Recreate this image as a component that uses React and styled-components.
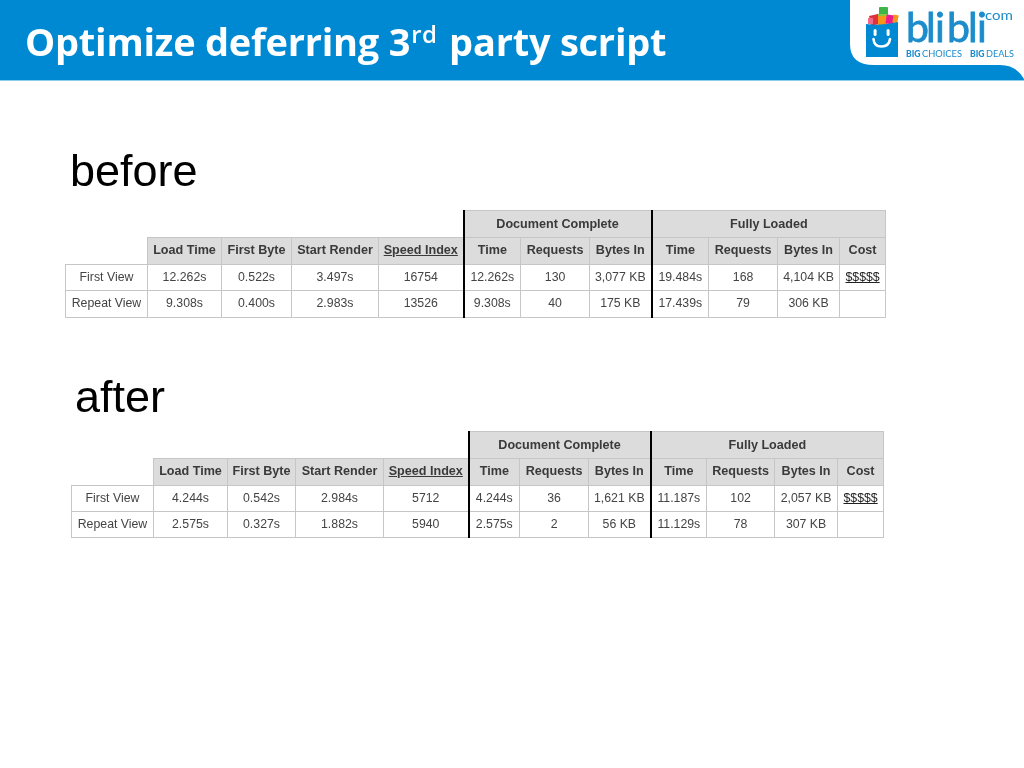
import React from "react";
import styled, { createGlobalStyle } from "styled-components";

const Global = createGlobalStyle`
  html, body { margin: 0; padding: 0; background: #fff; }
  body { font-family: "Liberation Sans", Arial, sans-serif; }
`;

const Slide = styled.div`
  width: 1024px;
  height: 768px;
  overflow: hidden;
  background: #fff;
`;

const Header = styled.header`
  position: relative;
  height: 81px;
  box-sizing: border-box;
  background: #0089d3;
  border-bottom: 1px solid #8ccdee;
  padding: 16px 0 0 25px;
`;

const Title = styled.h1`
  margin: 0;
  font-family: "Open Sans", sans-serif;
  font-weight: 700;
  font-size: 38px;
  line-height: 50px;
  letter-spacing: -0.24px;
  color: #fff;
  white-space: nowrap;
  filter: blur(0.3px);
  sup { font-size: 24px; line-height: 0; vertical-align: 13px; font-weight: 600; letter-spacing: 0.5px; margin: 0 2px 0 1px; }
`;

const LogoArt = styled.svg`
  position: absolute;
  top: 0;
  right: 0;
  display: block;
`;

const Main = styled.main`
  display: flex;
  flex-direction: column;
`;

const Section = styled.section`
  display: flex;
  flex-direction: column;
  padding-left: ${(p) => p.$left}px;
  padding-top: ${(p) => p.$top}px;
`;

const Label = styled.div`
  font-size: 45px;
  line-height: 52px;
  color: #000;
  margin-left: ${(p) => p.$indent}px;
  margin-bottom: ${(p) => p.$gap}px;
  filter: blur(0.3px);
`;

const Table = styled.table`
  border-collapse: collapse;
  table-layout: fixed;
  width: ${(p) => p.$width}px;
  filter: blur(0.45px);
  color: #3a3a3a;
  font-size: 12.3px;
`;

const HeadRow = styled.tr`
  height: ${(p) => p.$h}px;
`;

const Row = styled.tr`
  height: ${(p) => p.$h}px;
`;

const Blank = styled.th`
  border: none;
  padding: 0;
`;

const Head = styled.th`
  padding: 0 0 ${(p) => (p.$group ? 0 : 2)}px;
  background: #dcdcdc;
  border: 1px solid #c6c6c6;
  border-left: ${(p) => (p.$thick ? "2px solid #000" : "1px solid #c6c6c6")};
  font-weight: 700;
  font-size: 12.6px;
  white-space: nowrap;
  text-align: center;
  color: #3a3a3a;
  text-decoration: ${(p) => (p.$link ? "underline" : "none")};
`;

const Cell = styled.td`
  padding: 0 0 2px;
  background: #fff;
  border: 1px solid #c6c6c6;
  border-left: ${(p) => (p.$thick ? "2px solid #000" : "1px solid #c6c6c6")};
  white-space: nowrap;
  text-align: center;
  text-decoration: ${(p) => (p.$link ? "underline" : "none")};
  color: ${(p) => (p.$link ? "#222" : "#444")};
`;

const Bag = () => (
  <g>
    <rect x="46" y="15" width="10" height="10" fill="#e0303a" transform="rotate(-12 50 20)" />
    <rect x="44" y="18" width="5" height="6" fill="#f06a8c" />
    <rect x="55" y="7" width="9" height="9" rx="1" fill="#3db54a" />
    <rect x="54" y="14" width="10" height="3" fill="#8cc63f" />
    <rect x="54" y="16" width="9" height="9" fill="#f7941e" />
    <rect x="62" y="15" width="8" height="9" fill="#ec1c8e" transform="rotate(8 66 20)" />
    <rect x="69" y="15" width="5" height="8" fill="#f7941e" transform="rotate(12 72 19)" />
    <path d="M42 24 Q58 26 74 22 V57 H42Z" fill="#0089d3" />
    <rect x="49.600" y="29" width="3" height="7" rx="1.500" fill="#fff" />
    <rect x="62.600" y="29" width="3" height="7" rx="1.500" fill="#fff" />
    <path d="M49.500 39 Q50 46.500 57.500 46.500 Q65 46.500 66 39" stroke="#fff" strokeWidth="2.600" fill="none" strokeLinecap="round" />
  </g>
);

const LogoWord = styled.text`
  font-family: Lato, sans-serif;
  fill: #1b8ccb;
`;

const Logo = () => (
  <LogoArt width="200" height="80" viewBox="0 0 200 80" aria-label="blibli.com">
    <path d="M26 0 V44 Q26 65 50 65 H176 Q192 65 200 79 V0 Z" fill="#fff" />
    <filter id="soft"><feGaussianBlur stdDeviation="0.35" /></filter>
    <g filter="url(#soft)">
      <Bag />
      <LogoWord x="82 102 111 123 144 153" y="42" fontSize="41" stroke="#1b8ccb" strokeWidth="0.8">blibli</LogoWord>
      <LogoWord x="161" y="20" fontSize="14" textLength="28" lengthAdjust="spacingAndGlyphs">com</LogoWord>
      <LogoWord x="82" y="57" fontSize="8.600" fontWeight="900">BIG</LogoWord>
      <LogoWord x="98" y="57" fontSize="8.600" textLength="40" lengthAdjust="spacingAndGlyphs">CHOICES</LogoWord>
      <LogoWord x="146" y="57" fontSize="8.600" fontWeight="900">BIG</LogoWord>
      <LogoWord x="162" y="57" fontSize="8.600" textLength="28" lengthAdjust="spacingAndGlyphs">DEALS</LogoWord>
    </g>
  </LogoArt>
);

const heads = ["Load Time", "First Byte", "Start Render", "Speed Index", "Time", "Requests", "Bytes In", "Time", "Requests", "Bytes In", "Cost"];
const linkHead = 3;
const thickAt = (i) => i === 4 || i === 7;

const DataTable = ({ cols, heights, rows }) => (
  <Table $width={cols.reduce((a, b) => a + b, 0)}>
    <colgroup>
      {cols.map((w, i) => (
        <col key={i} style={{ width: w }} />
      ))}
    </colgroup>
    <thead>
      <HeadRow $h={heights[0]}>
        <Blank colSpan={5} />
        <Head colSpan={3} $thick $group>Document Complete</Head>
        <Head colSpan={4} $thick $group>Fully Loaded</Head>
      </HeadRow>
      <HeadRow $h={heights[1]}>
        <Blank />
        {heads.map((h, i) => (
          <Head key={i} $thick={thickAt(i)} $link={i === linkHead}>{h}</Head>
        ))}
      </HeadRow>
    </thead>
    <tbody>
      {rows.map((r, ri) => (
        <Row key={ri} $h={heights[2 + ri]}>
          {r.map((c, i) => (
            <Cell key={i} $thick={thickAt(i - 1)} $link={c === "$$$$$"}>{c}</Cell>
          ))}
        </Row>
      ))}
    </tbody>
  </Table>
);

const before = [
  ["First View", "12.262s", "0.522s", "3.497s", "16754", "12.262s", "130", "3,077 KB", "19.484s", "168", "4,104 KB", "$$$$$"],
  ["Repeat View", "9.308s", "0.400s", "2.983s", "13526", "9.308s", "40", "175 KB", "17.439s", "79", "306 KB", ""],
];
const after = [
  ["First View", "4.244s", "0.542s", "2.984s", "5712", "4.244s", "36", "1,621 KB", "11.187s", "102", "2,057 KB", "$$$$$"],
  ["Repeat View", "2.575s", "0.327s", "1.882s", "5940", "2.575s", "2", "56 KB", "11.129s", "78", "307 KB", ""],
];

export default function App() {
  return (
    <Slide>
      <Global />
      <Header>
        <Title>Optimize deferring 3<sup>rd</sup> party script</Title>
        <Logo />
      </Header>
      <Main>
        <Section $left={65} $top={64}>
          <Label $indent={5} $gap={13}>before</Label>
          <DataTable cols={[82, 74, 70, 87, 85, 57, 69, 62, 57, 69, 62, 46]} heights={[27, 27, 26, 27]} rows={before} />
        </Section>
        <Section $left={71} $top={53}>
          <Label $indent={4} $gap={8}>after</Label>
          <DataTable cols={[82, 74, 68, 88, 85, 51, 69, 62, 56, 68, 63, 46]} heights={[27, 27, 26, 26]} rows={after} />
        </Section>
      </Main>
    </Slide>
  );
}
